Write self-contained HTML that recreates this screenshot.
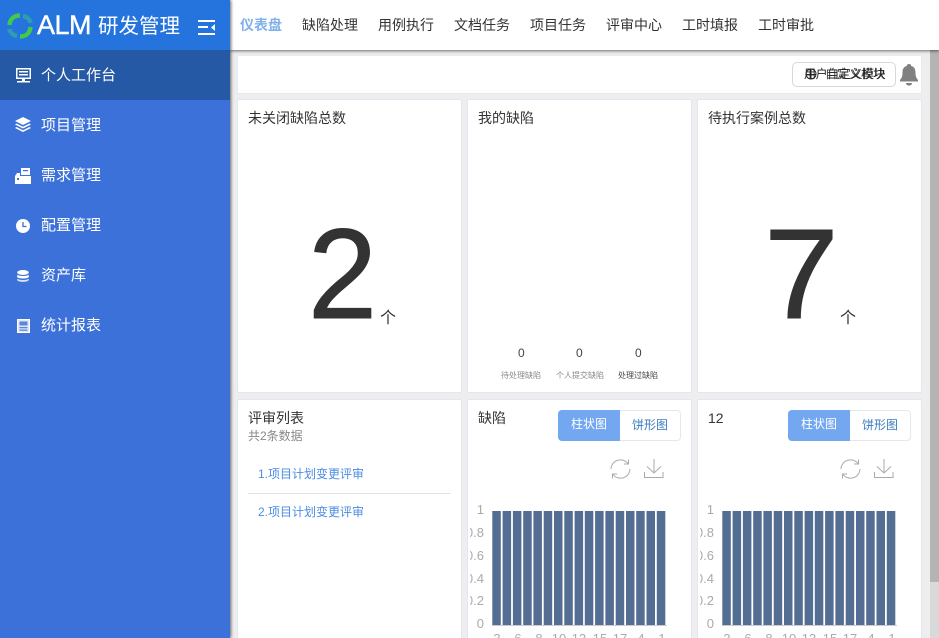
<!DOCTYPE html>
<html><head><meta charset="utf-8"><style>
*{box-sizing:border-box;margin:0;padding:0}
html,body{width:939px;height:638px;overflow:hidden;background:#eee;font-family:"Liberation Sans","Noto Sans CJK SC",sans-serif;color:#333}
#wrap{position:absolute;left:0;top:0;width:939px;height:638px;overflow:hidden;background:#eee}
.a{position:absolute;white-space:nowrap}
#side{position:absolute;left:0;top:0;width:230px;height:638px;background:#3b71d8;box-shadow:1px 0 3px rgba(0,0,0,.6);z-index:3}
#top{position:absolute;left:230px;top:0;width:709px;height:50px;background:#fff;box-shadow:0 1px 3px rgba(0,0,0,.55);z-index:2}
.m{position:absolute;left:41px;font-size:15px;line-height:20px;color:#fff}
.n{position:absolute;top:15px;font-size:14px;line-height:20px;color:#333}
.c{position:absolute;background:#fff;border:1px solid #e2e6f2;border-radius:2px;overflow:hidden}
.t{position:absolute;font-size:14px;line-height:18px;color:#333}
.seg{position:absolute;top:10px;width:123px;height:31px;border:1px solid #e4e7ed;border-radius:4px;font-size:12px;line-height:29px;color:#3a7cc0;background:#fff}
.seg b{position:absolute;left:-1px;top:-1px;width:62px;height:31px;background:#73a7ef;color:#fff;font-weight:400;text-align:center;border-radius:4px 0 0 4px}
.seg i{position:absolute;left:61px;top:0;width:60px;text-align:center;font-style:normal}
svg{position:absolute;overflow:visible}
</style></head><body><div id="wrap">
<div id="side">
<div class="a" style="left:0;top:0;width:230px;height:50px;background:#2574de"></div>
<div class="a" style="left:0;top:50px;width:230px;height:50px;background:#2558a5"></div>
<svg style="left:7px;top:13px" width="26" height="26" viewBox="0 0 26 26" fill="none" stroke-width="4.500"><path d="M2.500 12C3 6 7 2.500 13 2.500" stroke="#42c84a"/><path d="M16 3C20 3.500 23 7 23.500 10" stroke="#2f9cb0"/><path d="M23.500 14C23 20 19 23.500 13 23.500" stroke="#42c84a"/><path d="M10 23C6 22.500 3 19 2.500 16" stroke="#2f9cb0"/></svg>
<div class="a" style="left:37px;top:7px;font-size:27px;line-height:36px;color:#fff;letter-spacing:-.5px;-webkit-text-stroke:.4px #fff">ALM</div>
<div class="a" style="left:98px;top:12px;font-size:20.500px;line-height:30px;color:#fff">研发管理</div>
<svg style="left:198px;top:20px" width="18" height="15" fill="#fff"><rect x="0" y="0" width="17" height="2"/><rect x="0" y="6" width="10" height="2"/><rect x="0" y="13" width="17" height="2"/><path d="M17 4v7l-4-3.500z"/></svg>
<svg style="left:16px;top:68px" width="15" height="15" fill="#fff"><path d="M0 0h15v11H9v2h5v1.500H1V13h5v-2H0zM1.500 1.500v8h12v-8z"/><rect x="3" y="3" width="9" height="1.500"/><rect x="3" y="6" width="9" height="1.500"/></svg>
<div class="m" style="top:66px">个人工作台</div>
<svg style="left:15px;top:117px" width="16" height="16" fill="#fff"><path d="M8 0l8 4-8 4-8-4z"/><path d="M1.500 6.500L8 9.800l6.500-3.300L16 7.500 8 11.500 0 7.500z"/><path d="M1.500 10L8 13.300 14.500 10l1.500 1-8 4-8-4z"/></svg>
<div class="m" style="top:116px">项目管理</div>
<svg style="left:15px;top:168px" width="16" height="16" fill="#fff"><path d="M6 0h9v7H6z"/><path d="M0 8l2-3h3v3h11v8H0z"/><rect x="8" y="2" width="5" height="1.200" fill="#3b71d8"/><rect x="2" y="10" width="2" height="2" fill="#3b71d8"/></svg>
<div class="m" style="top:166px">需求管理</div>
<svg style="left:16px;top:219px" width="14" height="14"><circle cx="7" cy="7" r="7" fill="#fff"/><path d="M7 3v4.500h3.500" stroke="#3b71d8" stroke-width="1.300" fill="none"/></svg>
<div class="m" style="top:216px">配置管理</div>
<svg style="left:17px;top:270px" width="12" height="12" fill="#fff"><ellipse cx="6" cy="2.500" rx="5.800" ry="2.500"/><path d="M.2 4.500C1 6.500 11 6.500 11.800 4.500V7C11 9 1 9 .2 7z"/><path d="M.2 8.500C1 10.500 11 10.500 11.800 8.500V10C11 12.500 1 12.500 .2 10z" opacity=".8"/></svg>
<div class="m" style="top:266px">资产库</div>
<svg style="left:17px;top:319px" width="13" height="14"><rect x=".5" y=".5" width="12" height="13" fill="#dfe7f8" stroke="#fff"/><rect x="2.500" y="2.500" width="8" height="4" fill="#5b86dd"/><rect x="2.500" y="8" width="8" height="1.300" fill="#5b86dd"/><rect x="2.500" y="10.500" width="8" height="1.300" fill="#5b86dd"/></svg>
<div class="m" style="top:316px">统计报表</div>
</div>
<div id="top">
<div class="n" style="left:10px;color:#7eb0ea;font-weight:700">仪表盘</div>
<div class="n" style="left:72px">缺陷处理</div>
<div class="n" style="left:148px">用例执行</div>
<div class="n" style="left:224px">文档任务</div>
<div class="n" style="left:300px">项目任务</div>
<div class="n" style="left:376px">评审中心</div>
<div class="n" style="left:452px">工时填报</div>
<div class="n" style="left:528px">工时审批</div>
</div>

<div class="a" style="left:930px;top:50px;width:9px;height:588px;background:#d9d9d9"></div>
<div class="a" style="left:930px;top:50px;width:9px;height:532px;background:#b4b4b4"></div>

<div class="c" style="left:237px;top:55px;width:685px;height:39px;border-color:#e8eaf2"></div>
<div class="a" style="left:792px;top:62px;width:104px;height:25px;background:#fff;border:1px solid #d6d8dc;border-radius:5px"></div>
<div class="a" style="left:804px;top:66px;font-size:12px;line-height:17px;color:#222;letter-spacing:-.4px">用户自定义模块</div>
<div class="a" style="left:825px;top:66px;font-size:12px;line-height:17px;color:#222;opacity:.85">自定义模块</div>
<svg style="left:805px;top:68px" width="12" height="13" fill="none" stroke="#222"><circle cx="6" cy="6" r="5"/><path d="M1 6.500h10M6 1v10"/></svg>
<svg style="left:900px;top:64px" width="18" height="22" fill="#808080"><path d="M9 0c1.300 0 2.200.8 2.200 2 3.300.8 4.300 3.500 4.300 6.500 0 3.200.5 5.300 2.500 7.500v1.500H0V16c2-2.200 2.500-4.300 2.500-7.500S3.500 2.800 6.800 2C6.800.8 7.700 0 9 0z"/><path d="M6 19h6c0 1.500-1.200 2.500-3 2.500S6 20.500 6 19z"/></svg>

<div class="c" style="left:237px;top:99px;width:225px;height:294px">
<div class="t" style="left:10px;top:9px">未关闭缺陷总数</div>
<div class="a" style="left:70px;top:90px;font-size:128px;line-height:170px;color:#333;transform:scaleX(.97);transform-origin:left;-webkit-text-stroke:1px #333">2</div>
<div class="a" style="left:142px;top:208px;font-size:16px;line-height:22px;color:#333">个</div>
</div>
<div class="c" style="left:467px;top:99px;width:225px;height:294px">
<div class="t" style="left:10px;top:9px">我的缺陷</div>
<div class="a" style="left:50px;top:245px;font-size:12px;line-height:16px;color:#444">0</div>
<div class="a" style="left:108px;top:245px;font-size:12px;line-height:16px;color:#444">0</div>
<div class="a" style="left:167px;top:245px;font-size:12px;line-height:16px;color:#444">0</div>
<div class="a" style="left:33px;top:270px;font-size:8px;line-height:12px;color:#888">待处理缺陷</div>
<div class="a" style="left:88px;top:270px;font-size:8px;line-height:12px;color:#888">个人提交缺陷</div>
<div class="a" style="left:150px;top:270px;font-size:8px;line-height:12px;color:#444">处理过缺陷</div>
</div>
<div class="c" style="left:697px;top:99px;width:225px;height:294px">
<div class="t" style="left:10px;top:9px">待执行案例总数</div>
<div class="a" style="left:66px;top:90px;font-size:128px;line-height:170px;color:#333;transform:scaleX(1.05);transform-origin:left;-webkit-text-stroke:1px #333">7</div>
<div class="a" style="left:142px;top:208px;font-size:16px;line-height:22px;color:#333">个</div>
</div>

<div class="c" style="left:237px;top:399px;width:225px;height:260px">
<div class="t" style="left:10px;top:9px">评审列表</div>
<div class="a" style="left:10px;top:28px;font-size:12px;line-height:17px;color:#888">共2条数据</div>
<div class="a" style="left:20px;top:66px;font-size:12px;line-height:17px;color:#4a8de0">1.项目计划变更评审</div>
<div class="a" style="left:10px;top:93px;width:203px;height:1px;background:#dfe3ee"></div>
<div class="a" style="left:20px;top:104px;font-size:12px;line-height:17px;color:#4a8de0">2.项目计划变更评审</div>
</div>

<div class="c" style="left:467px;top:399px;width:225px;height:260px">
<div class="t" style="left:10px;top:9px">缺陷</div>
<div class="seg" style="left:90px"><b>柱状图</b><i>饼形图</i></div>
<svg style="left:142px;top:59px" width="21" height="20" fill="none" stroke="#aaa" stroke-width="1"><path d="M1 10A9.500 9.500 0 0 1 18 4.500M20 10A9.500 9.500 0 0 1 3 15.500"/><path d="M18.500 .5v4.500H14M2.500 19.500V15H7"/></svg>
<svg style="left:176px;top:59px" width="20" height="20" fill="none" stroke="#aaa" stroke-width="1"><path d="M10 0v14M3 7.500l7 6.500 7-6.500"/><path d="M.5 13v5.500h18.500V13"/></svg>
<svg style="left:0;top:0" width="225" height="260"><g fill="#aaa" font-size="13" text-anchor="end"><text x="16" y="114">1</text><text x="16" y="137">0.8</text><text x="16" y="160">0.6</text><text x="16" y="183">0.4</text><text x="16" y="205">0.2</text><text x="16" y="228">0</text></g><rect x="-1" y="120" width="3" height="100" fill="#fff"/><g fill="#546d92"><rect x="24.300" y="111" width="8.500" height="114"/><rect x="34.600" y="111" width="8.500" height="114"/><rect x="44.900" y="111" width="8.500" height="114"/><rect x="55.200" y="111" width="8.500" height="114"/><rect x="65.400" y="111" width="8.500" height="114"/><rect x="75.700" y="111" width="8.500" height="114"/><rect x="86" y="111" width="8.500" height="114"/><rect x="96.300" y="111" width="8.500" height="114"/><rect x="106.600" y="111" width="8.500" height="114"/><rect x="116.800" y="111" width="8.500" height="114"/><rect x="127.100" y="111" width="8.500" height="114"/><rect x="137.400" y="111" width="8.500" height="114"/><rect x="147.700" y="111" width="8.500" height="114"/><rect x="158" y="111" width="8.500" height="114"/><rect x="168.200" y="111" width="8.500" height="114"/><rect x="178.500" y="111" width="8.500" height="114"/><rect x="188.800" y="111" width="8.500" height="114"/></g><rect x="24" y="225" width="175" height="1" fill="#ccc"/><g fill="#aaa" font-size="13" text-anchor="middle"><text x="29" y="243">3</text><text x="50" y="243">6</text><text x="71" y="243">8</text><text x="91" y="243">10</text><text x="111" y="243">13</text><text x="132" y="243">15</text><text x="152" y="243">17</text><text x="173" y="243">4</text><text x="194" y="243">1</text></g></svg>
</div>

<div class="c" style="left:697px;top:399px;width:225px;height:260px">
<div class="t" style="left:10px;top:9px">12</div>
<div class="seg" style="left:90px"><b>柱状图</b><i>饼形图</i></div>
<svg style="left:142px;top:59px" width="21" height="20" fill="none" stroke="#aaa" stroke-width="1"><path d="M1 10A9.500 9.500 0 0 1 18 4.500M20 10A9.500 9.500 0 0 1 3 15.500"/><path d="M18.500 .5v4.500H14M2.500 19.500V15H7"/></svg>
<svg style="left:176px;top:59px" width="20" height="20" fill="none" stroke="#aaa" stroke-width="1"><path d="M10 0v14M3 7.500l7 6.500 7-6.500"/><path d="M.5 13v5.500h18.500V13"/></svg>
<svg style="left:0;top:0" width="225" height="260"><g fill="#aaa" font-size="13" text-anchor="end"><text x="16" y="114">1</text><text x="16" y="137">0.8</text><text x="16" y="160">0.6</text><text x="16" y="183">0.4</text><text x="16" y="205">0.2</text><text x="16" y="228">0</text></g><rect x="-1" y="120" width="3" height="100" fill="#fff"/><g fill="#546d92"><rect x="24.300" y="111" width="8.500" height="114"/><rect x="34.600" y="111" width="8.500" height="114"/><rect x="44.900" y="111" width="8.500" height="114"/><rect x="55.200" y="111" width="8.500" height="114"/><rect x="65.400" y="111" width="8.500" height="114"/><rect x="75.700" y="111" width="8.500" height="114"/><rect x="86" y="111" width="8.500" height="114"/><rect x="96.300" y="111" width="8.500" height="114"/><rect x="106.600" y="111" width="8.500" height="114"/><rect x="116.800" y="111" width="8.500" height="114"/><rect x="127.100" y="111" width="8.500" height="114"/><rect x="137.400" y="111" width="8.500" height="114"/><rect x="147.700" y="111" width="8.500" height="114"/><rect x="158" y="111" width="8.500" height="114"/><rect x="168.200" y="111" width="8.500" height="114"/><rect x="178.500" y="111" width="8.500" height="114"/><rect x="188.800" y="111" width="8.500" height="114"/></g><rect x="24" y="225" width="175" height="1" fill="#ccc"/><g fill="#aaa" font-size="13" text-anchor="middle"><text x="29" y="243">3</text><text x="50" y="243">6</text><text x="71" y="243">8</text><text x="91" y="243">10</text><text x="111" y="243">13</text><text x="132" y="243">15</text><text x="152" y="243">17</text><text x="173" y="243">4</text><text x="194" y="243">1</text></g></svg>
</div>
</div></body></html>
